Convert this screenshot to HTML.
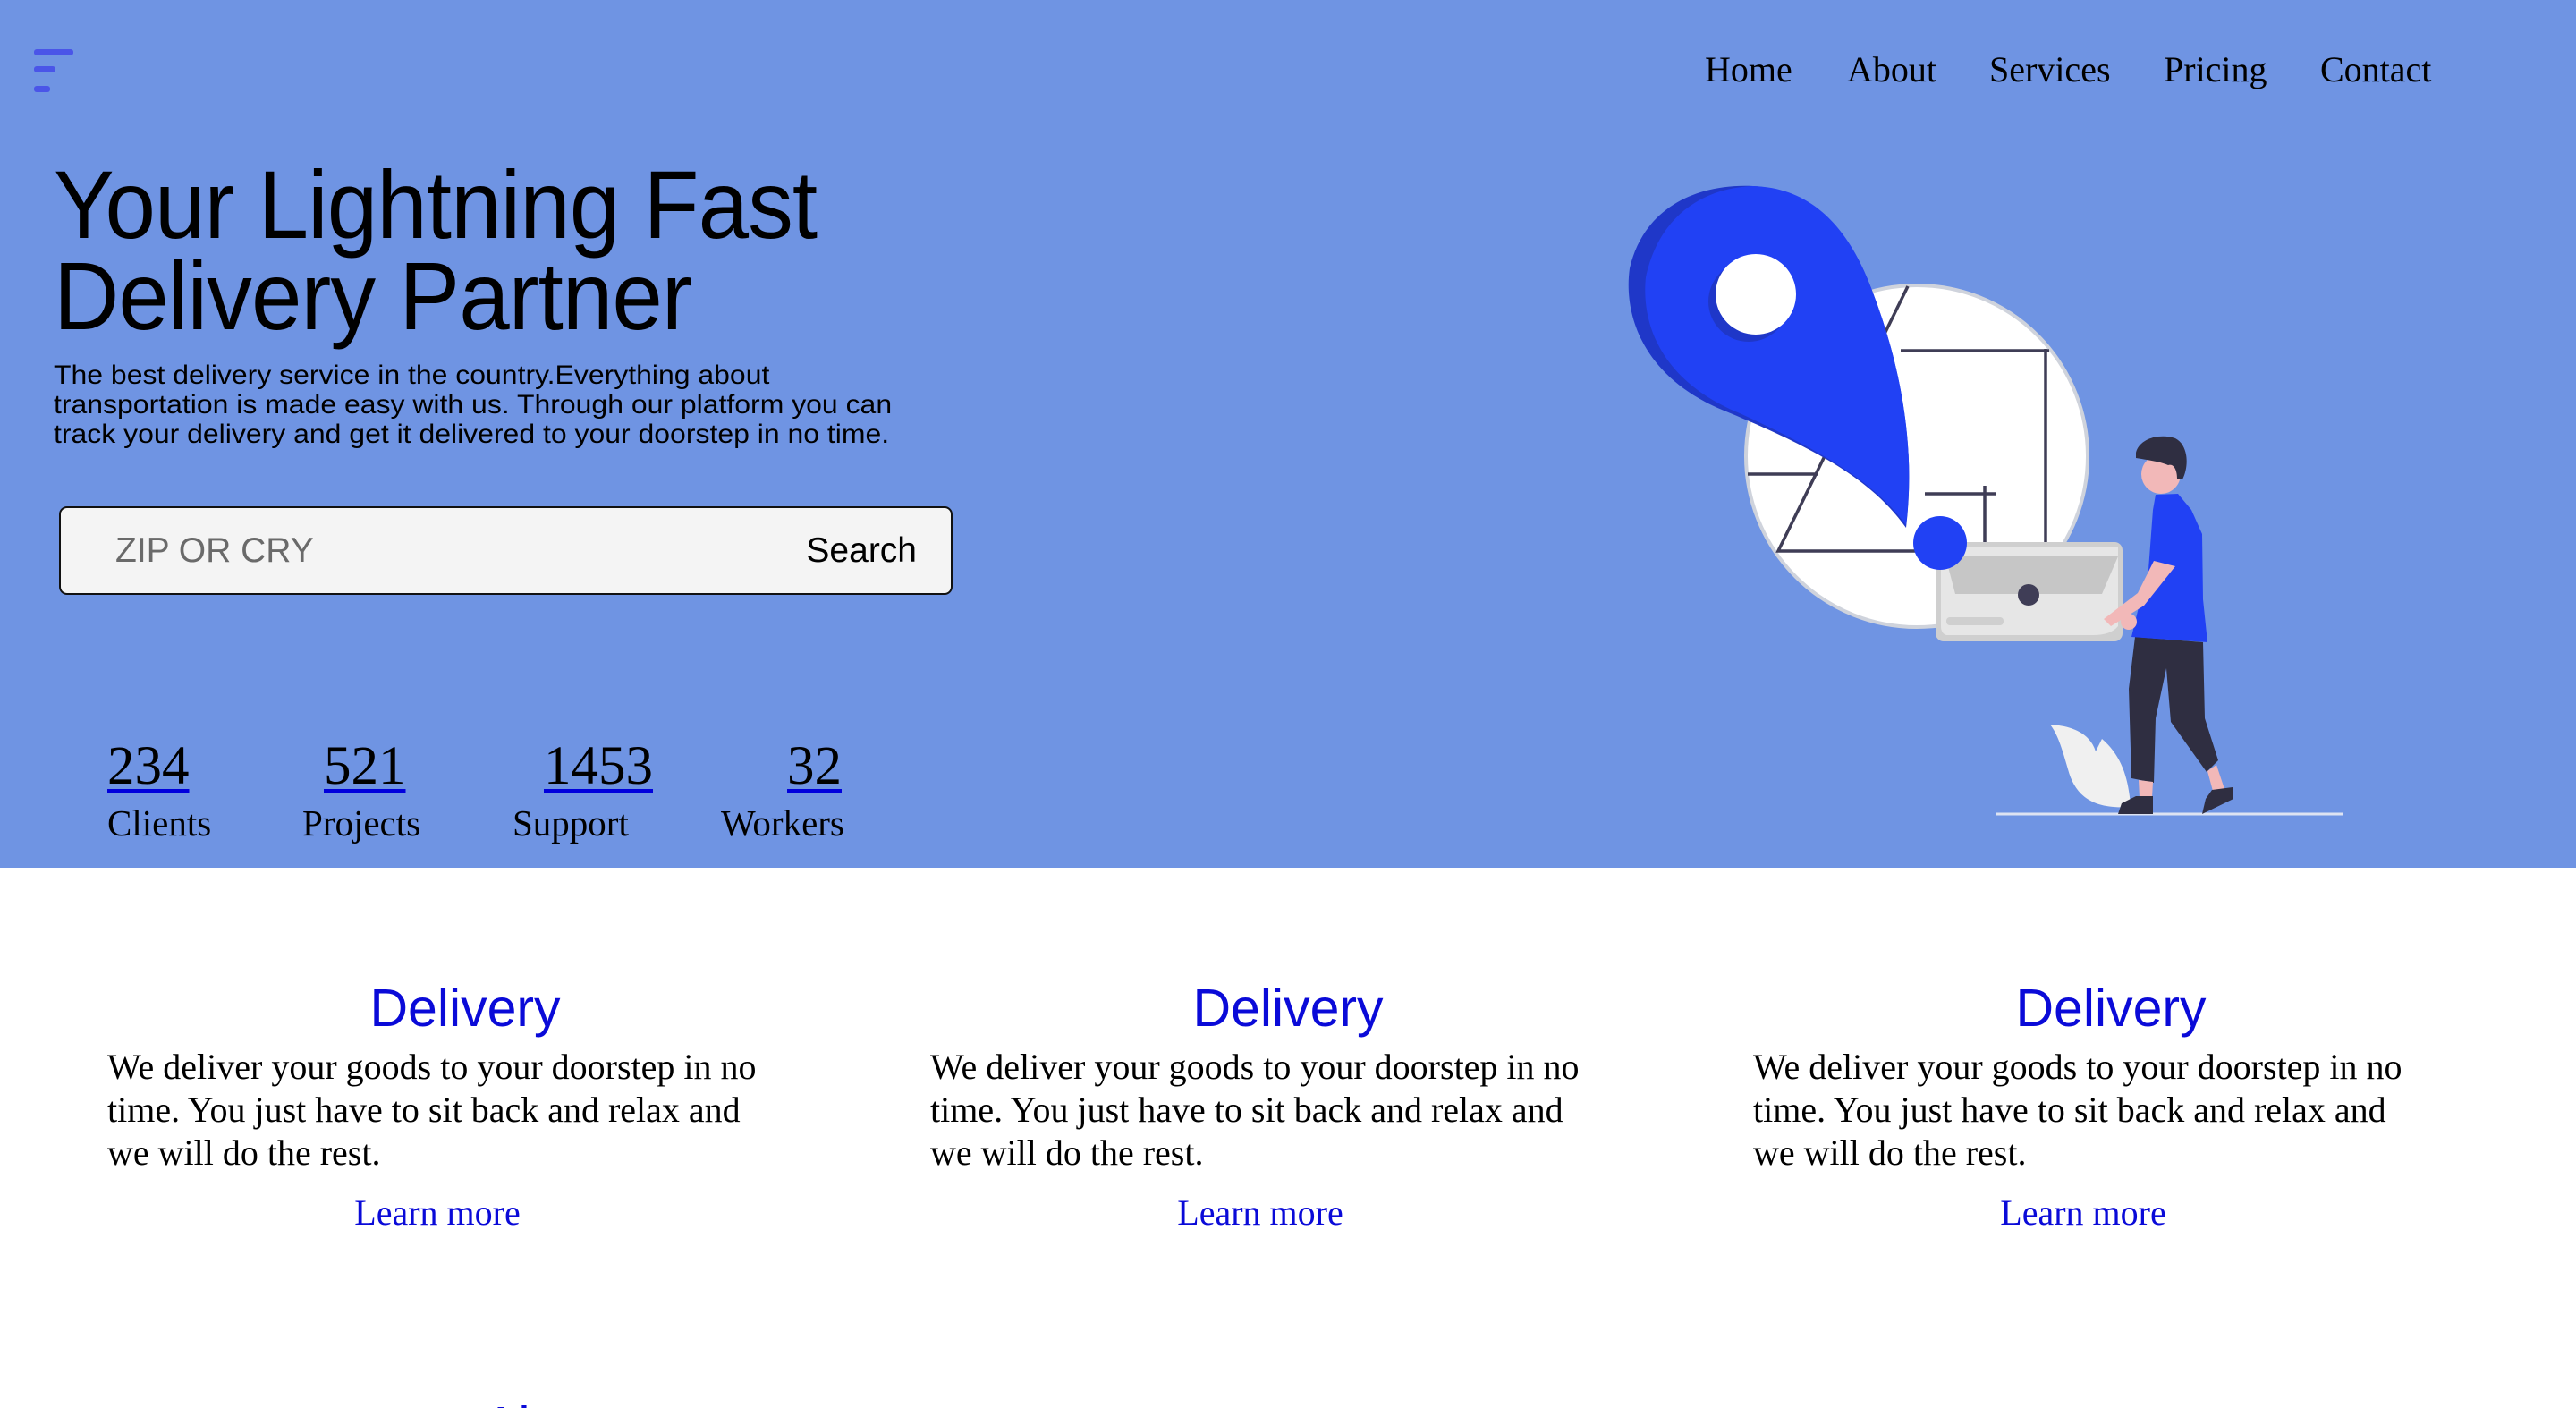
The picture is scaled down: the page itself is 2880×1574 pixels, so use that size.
<!DOCTYPE html>
<html><head><meta charset="utf-8"><style>
*{margin:0;padding:0;box-sizing:border-box}
html,body{width:2880px;height:1574px;overflow:hidden;background:#fff}
body{position:relative;font-family:"Liberation Serif",serif}
.hero{position:absolute;left:0;top:0;width:2880px;height:970px;background:#6f94e3}
.abs{position:absolute;white-space:nowrap}
.nav{font-size:40px;color:#000;top:54px}
h1{position:absolute;left:60px;top:178px;font-family:"Liberation Sans",sans-serif;font-weight:normal;font-size:108px;line-height:102px;color:#000;letter-spacing:-1px;transform:scaleX(0.94);transform-origin:left top;white-space:nowrap}
.p{position:absolute;left:60px;top:403px;font-family:"Liberation Sans",sans-serif;font-size:30px;line-height:33px;color:#000;transform:scaleX(1.065);transform-origin:left top;white-space:nowrap}
.search{position:absolute;left:66px;top:566px;width:999px;height:99px;border:2px solid #111;border-radius:9px;background:#f4f4f4;font-family:"Liberation Sans",sans-serif;font-size:39px}
.num{font-size:61px;text-decoration:underline;text-decoration-color:#0000dd;text-decoration-thickness:4px;text-underline-offset:6px;color:#000;top:822px}
.lab{font-size:41px;top:896px;color:#000}
.dh{font-family:"Liberation Sans",sans-serif;font-size:59px;color:#0a0ad8;top:1093px;transform:translateX(-50%)}
.dp{font-size:40px;line-height:48px;color:#000;top:1169px;white-space:normal;width:760px}
.lm{font-size:40px;color:#0a0ad8;top:1332px;transform:translateX(-50%)}
</style></head><body>
<div class="hero"></div>
<div class="abs" style="left:38px;top:55px;width:44px;height:7px;background:#4a55e8;border-radius:3px"></div>
<div class="abs" style="left:38px;top:74px;width:24px;height:7px;background:#4a55e8;border-radius:3px"></div>
<div class="abs" style="left:38px;top:96px;width:18px;height:7px;background:#4a55e8;border-radius:3px"></div>
<div class="abs nav" style="left:1906px">Home</div>
<div class="abs nav" style="left:2065px">About</div>
<div class="abs nav" style="left:2224px">Services</div>
<div class="abs nav" style="left:2419px">Pricing</div>
<div class="abs nav" style="left:2594px">Contact</div>
<h1>Your Lightning Fast<br>Delivery Partner</h1>
<div class="p">The best delivery service in the country.Everything about<br>transportation is made easy with us. Through our platform you can<br>track your delivery and get it delivered to your doorstep in no time.</div>
<div class="search"><span class="abs" style="left:61px;top:26px;color:#6a6a6a">ZIP OR CRY</span><span class="abs" style="right:38px;top:26px;color:#000">Search</span></div>
<div class="abs num" style="left:120px">234</div>
<div class="abs num" style="left:362px">521</div>
<div class="abs num" style="left:608px">1453</div>
<div class="abs num" style="left:880px">32</div>
<div class="abs lab" style="left:120px">Clients</div>
<div class="abs lab" style="left:338px">Projects</div>
<div class="abs lab" style="left:573px">Support</div>
<div class="abs lab" style="left:806px">Workers</div>
<svg class="abs" style="left:0;top:0" width="2880" height="970" viewBox="0 0 2880 970">
<circle cx="2143" cy="510" r="191" fill="#fff" stroke="#cfd3dc" stroke-width="4"/>
<g stroke="#3f3d56" stroke-width="3.5" fill="none">
<path d="M2133 320 L1988 616 L2142 616"/>
<path d="M2125 392 L2291 392 M2287 390 L2287 606"/>
<path d="M1954 530 L2032 530"/>
<path d="M2152 552 L2231 552 M2219 543 L2219 606"/>
</g>
<path d="M2131 590 C2095 540 2040 505 1925 458 C1835 420 1815 350 1822 300 C1838 230 1900 205 1960 208 C2030 212 2070 260 2095 330 C2125 410 2142 500 2131 590Z" fill="#1f37c8"/>
<path d="M2131 587 C2100 545 2050 510 1945 462 C1855 425 1835 360 1840 310 C1855 240 1905 210 1960 208 C2030 210 2070 260 2095 330 C2125 410 2142 500 2131 587Z" fill="#2141f4"/>
<circle cx="1955" cy="337" r="45" fill="#1f37c8"/>
<ellipse cx="1963" cy="329" rx="45" ry="45" fill="#fff"/>
<rect x="2164" y="606" width="209" height="111" rx="9" fill="#cfcfcf"/>
<path d="M2170 612 L2368 612 L2368 700 Q2360 710 2340 710 L2176 710 Q2170 708 2170 700Z" fill="#e6e6e6"/>
<path d="M2175 622 L2368 622 L2350 664 L2186 664Z" fill="#c6c6c6"/>
<circle cx="2268" cy="665" r="12" fill="#3f3d56"/>
<rect x="2176" y="690" width="64" height="9" rx="4" fill="#cfcfcf"/>
<circle cx="2169" cy="607" r="30" fill="#2141f4"/>
<path d="M2292 810 C2330 812 2340 830 2343 840 L2350 826 C2372 845 2380 870 2382 902 C2340 905 2320 890 2312 860 C2305 835 2300 820 2292 810Z" fill="#f0f0f0"/>
<line x1="2232" y1="910" x2="2620" y2="910" stroke="#dde3f2" stroke-width="3"/>
<path d="M2387 712 L2463 718 L2465 803 L2480 850 L2467 863 L2427 807 L2422 747 L2410 803 L2408 875 L2383 870 L2380 770Z" fill="#2f2e41"/>
<path d="M2391 872 L2407 874 L2406 892 L2392 892Z M2468 862 L2478 855 L2488 885 L2475 888Z" fill="#f2b8b8"/>
<path d="M2368 910 L2372 898 L2388 890 L2407 890 L2407 910Z" fill="#2f2e41"/>
<path d="M2462 910 L2466 893 L2473 883 L2496 880 L2497 893Z" fill="#2f2e41"/>
<path d="M2410 553 L2435 552 L2450 570 L2462 597 L2463 670 L2468 718 L2383 712 L2390 683 L2402 637 L2407 570Z" fill="#2141f4"/>
<path d="M2408 627 L2432 633 L2397 677 L2360 700 L2352 692 L2390 663Z" fill="#f2b8b8"/>
<circle cx="2380" cy="695" r="9" fill="#f2b8b8"/>
<circle cx="2416" cy="530" r="22" fill="#f2b8b8"/>
<path d="M2388 506 C2392 490 2415 484 2432 490 C2446 497 2448 520 2440 536 L2434 535 C2434 525 2430 518 2424 520 C2415 516 2400 514 2388 512Z" fill="#2f2e41"/>
</svg>
<div class="abs dh" style="left:520px">Delivery</div>
<div class="abs dh" style="left:1440px">Delivery</div>
<div class="abs dh" style="left:2360px">Delivery</div>
<div class="abs dp" style="left:120px">We deliver your goods to your doorstep in no time. You just have to sit back and relax and we will do the rest.</div>
<div class="abs dp" style="left:1040px">We deliver your goods to your doorstep in no time. You just have to sit back and relax and we will do the rest.</div>
<div class="abs dp" style="left:1960px">We deliver your goods to your doorstep in no time. You just have to sit back and relax and we will do the rest.</div>
<div class="abs lm" style="left:489px">Learn more</div>
<div class="abs lm" style="left:1409px">Learn more</div>
<div class="abs lm" style="left:2329px">Learn more</div>
<div class="abs" style="left:540px;top:1560px;font-family:'Liberation Sans',sans-serif;font-size:59px;color:#0a0ad8">About</div>
</body></html>
